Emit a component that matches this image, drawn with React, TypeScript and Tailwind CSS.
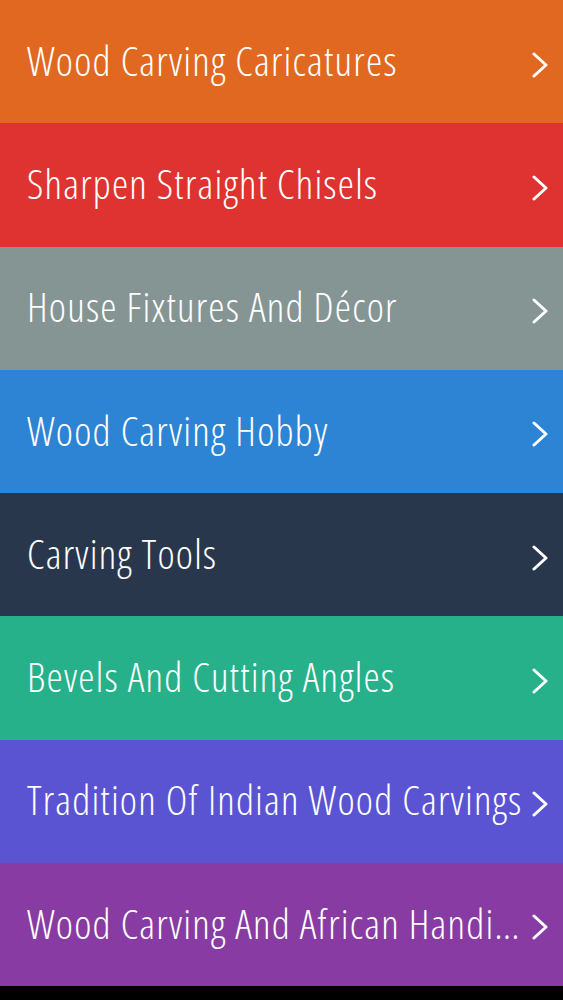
import React from 'react';

interface Topic {
    title: string;
    color: string;
}

// 分类列表
const topics: Topic[] = [
    { title: 'Wood Carving Caricatures', color: 'bg-[#e06820]' },
    { title: 'Sharpen Straight Chisels', color: 'bg-[#de3330]' },
    { title: 'House Fixtures And Décor', color: 'bg-[#849594]' },
    { title: 'Wood Carving Hobby', color: 'bg-[#2d83d4]' },
    { title: 'Carving Tools', color: 'bg-[#29374d]' },
    { title: 'Bevels And Cutting Angles', color: 'bg-[#27b18b]' },
    { title: 'Tradition Of Indian Wood Carvings', color: 'bg-[#5a54d3]' },
    { title: 'Wood Carving And African Handicrafts', color: 'bg-[#883ba3]' },
];

function Chevron() {
    return (
        <svg viewBox="0 0 18 26" className="w-[18px] h-[26px] shrink-0 mt-[6px]" fill="none">
            <polyline
                points="3,2 15,13 3,24"
                stroke="white"
                strokeWidth="3"
                strokeLinecap="round"
                strokeLinejoin="round"
            />
        </svg>
    );
}

function App() {
    return (
        <div className="w-[563px] h-[1000px] bg-black flex flex-col overflow-hidden">
            {topics.map((t) => (
                <div
                    key={t.title}
                    className={`${t.color} h-[123.25px] shrink-0 flex items-center pl-[27px] pr-[14px] cursor-pointer`}
                >
                    <span className="flex-1 min-w-0 truncate text-white text-[41px] tracking-[1.2px] leading-[1.4] pb-[2px] font-['Open_Sans',sans-serif] font-[350] [font-stretch:79%]">
                        {t.title}
                    </span>
                    <Chevron />
                </div>
            ))}
        </div>
    );
}

export default App;
